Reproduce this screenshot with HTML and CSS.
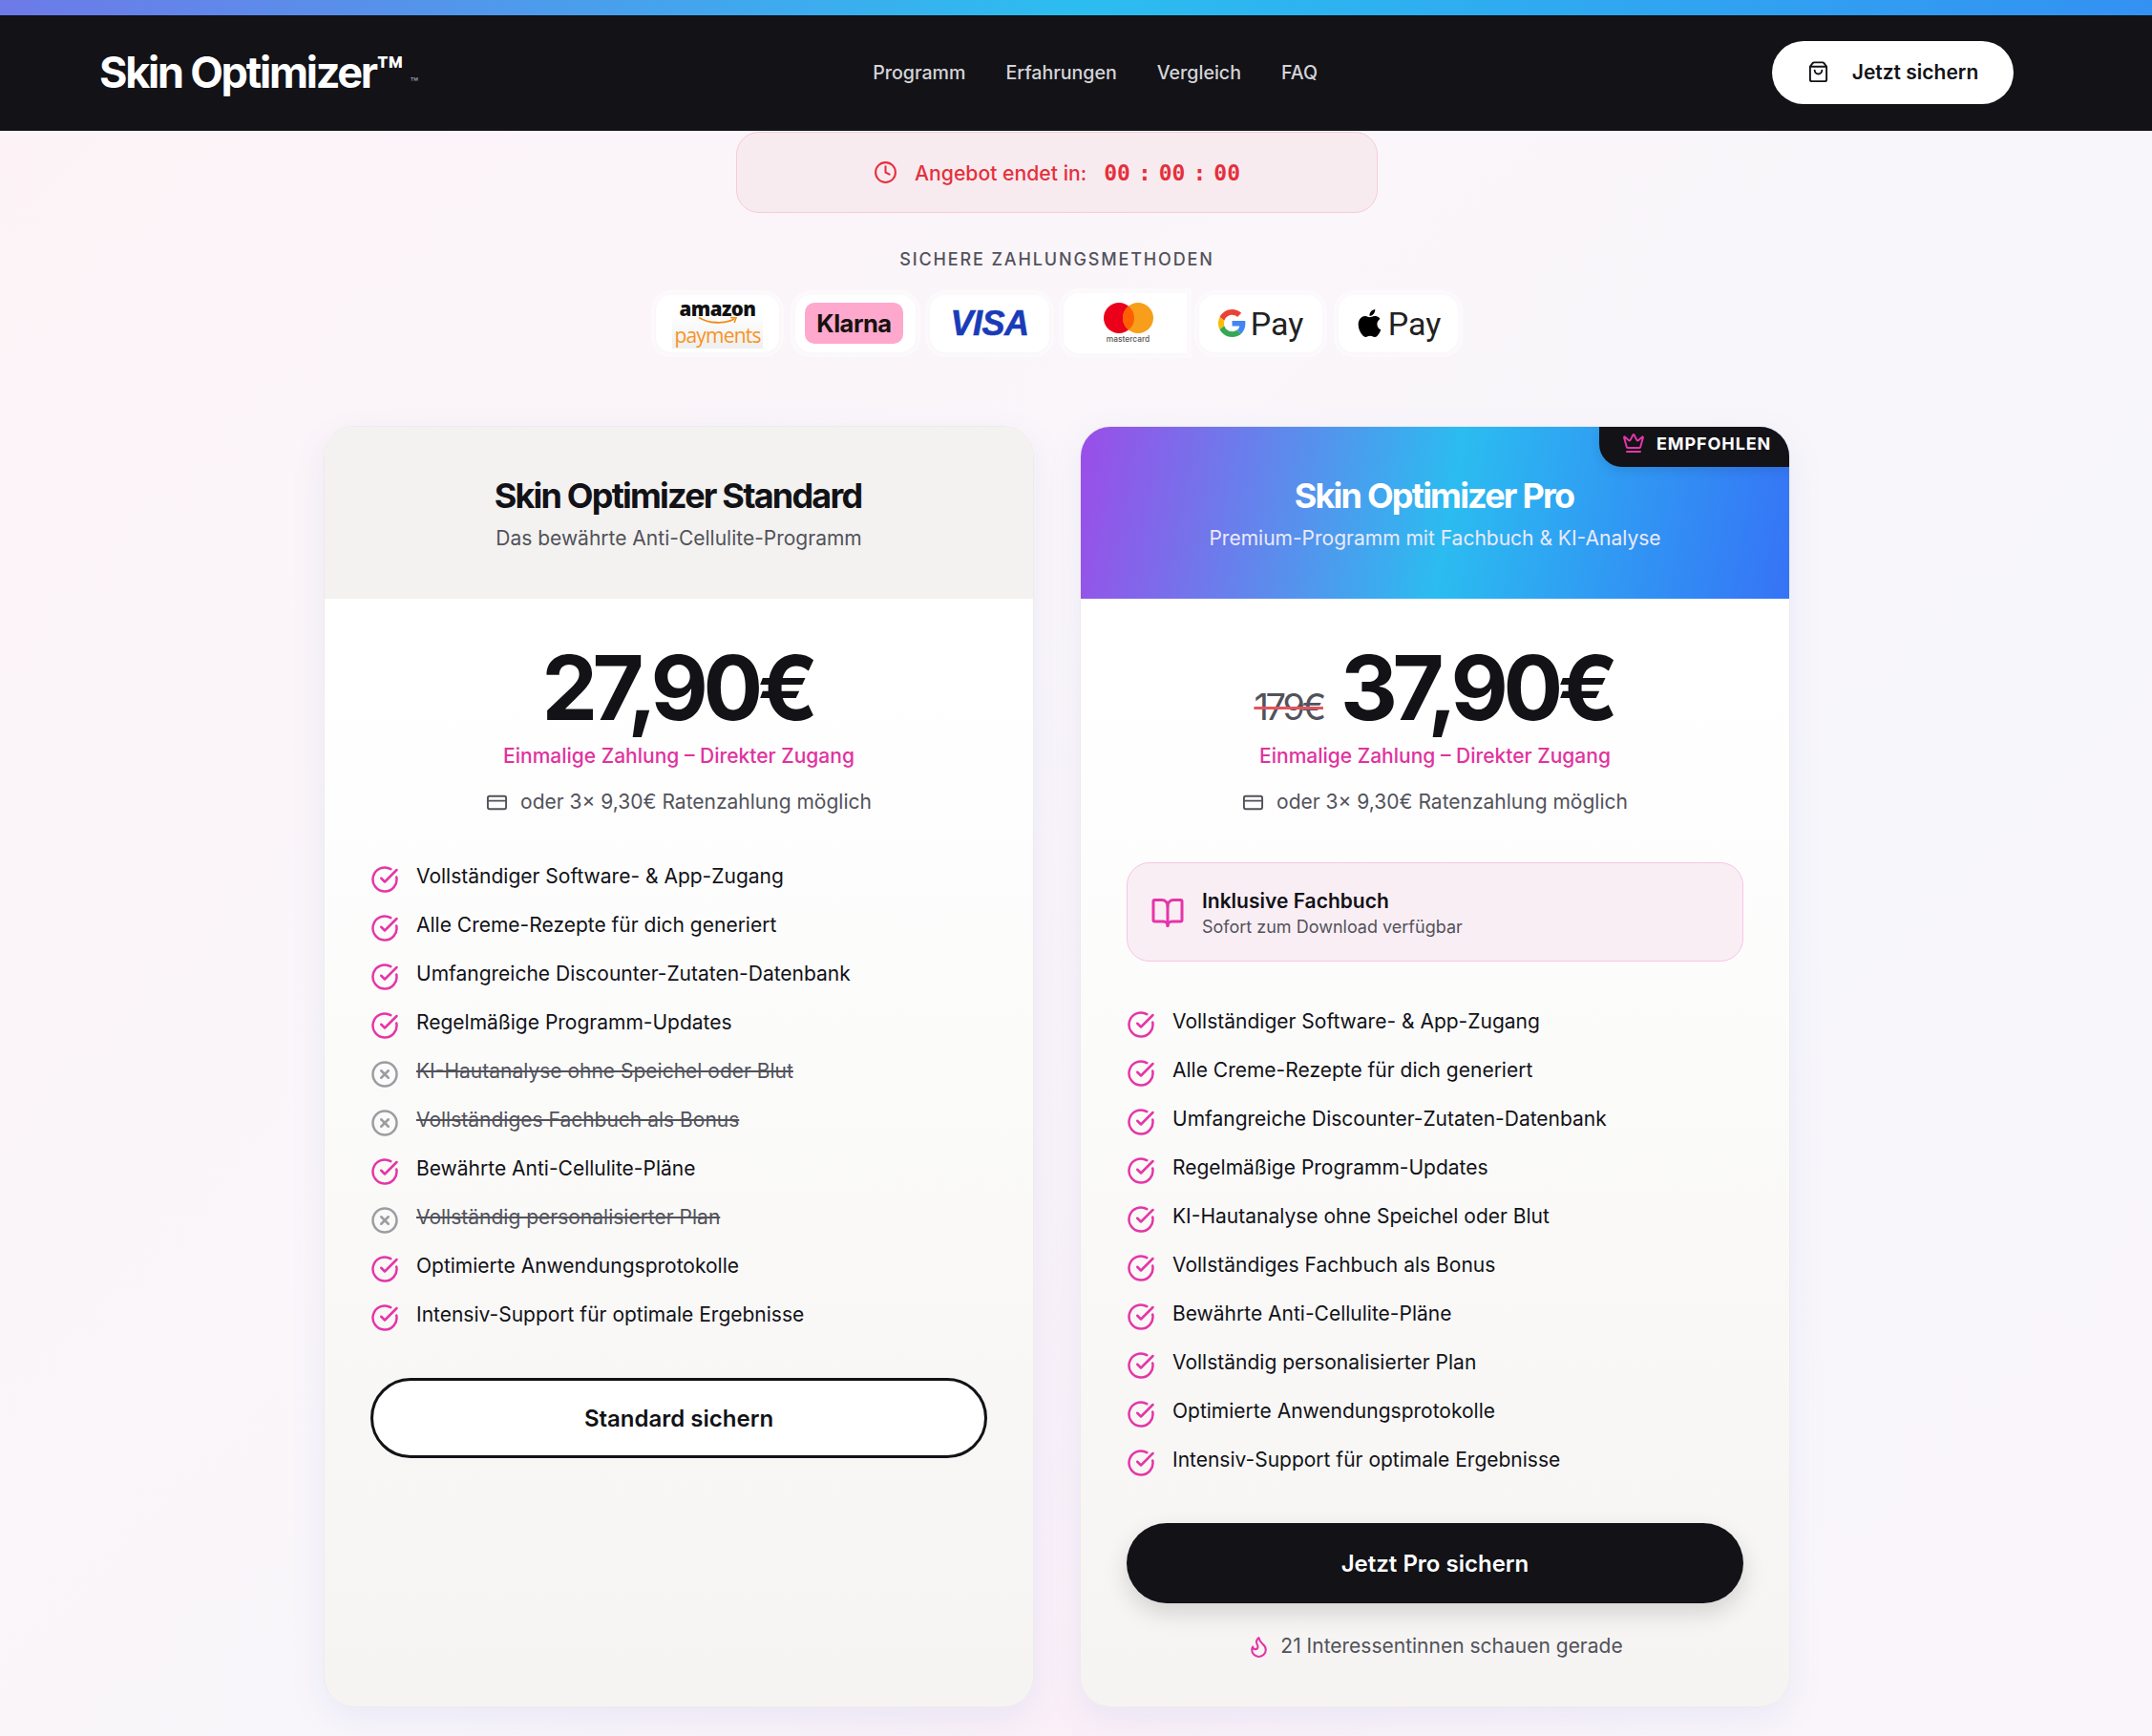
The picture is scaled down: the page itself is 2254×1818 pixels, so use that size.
FILE: index.html
```html
<!DOCTYPE html>
<html lang="de">
<head>
  <meta charset="UTF-8">
  <meta name="viewport" content="width=device-width, initial-scale=1.0">
  <title>Skin Optimizer</title>
  <link rel="stylesheet" href="styles.css">
</head>
<body>
  <svg class="icon-defs" width="0" height="0">
    <symbol id="i-check" viewBox="0 0 24 24"><path d="M21.801 10A10 10 0 1 1 17 3.335"/><path d="m9 11 3 3L22 4"/></symbol>
    <symbol id="i-x" viewBox="0 0 24 24"><circle cx="12" cy="12" r="10"/><path d="m15 9-6 6"/><path d="m9 9 6 6"/></symbol>
    <symbol id="i-card" viewBox="0 0 24 24"><rect x="2" y="5" width="20" height="14" rx="2"/><path d="M2 10h20"/></symbol>
  </svg>

  <div class="top-bar"></div>
  <header class="site-header">
    <div class="logo">Skin Optimizer™<span class="logo-tm">™</span></div>
    <nav class="main-nav">
      <a>Programm</a>
      <a>Erfahrungen</a>
      <a>Vergleich</a>
      <a>FAQ</a>
    </nav>
    <a class="header-cta">
      <svg class="ico cta-ico" viewBox="0 0 24 24"><path d="M16 10a4 4 0 0 1-8 0"/><path d="M3.103 6.034h17.794"/><path d="M3.4 5.467a2 2 0 0 0-.4 1.2V20a2 2 0 0 0 2 2h14a2 2 0 0 0 2-2V6.667a2 2 0 0 0-.4-1.2l-2.4-3.2a2 2 0 0 0-1.6-.8H7.4a2 2 0 0 0-1.6.8z"/></svg>
      Jetzt sichern
    </a>
  </header>

  <main class="page">
    <div class="timer">
      <svg class="ico timer-ico" viewBox="0 0 24 24"><circle cx="12" cy="12" r="10"/><path d="M12 6v6l4 2"/></svg>
      <span class="timer-label">Angebot endet in:</span>
      <span class="timer-digits"><span>00</span><span>:</span><span>00</span><span>:</span><span>00</span></span>
    </div>

    <h2 class="pay-title">SICHERE ZAHLUNGSMETHODEN</h2>
    <div class="pay-row">
      <div class="pay-card pay-amazon">
        <div class="amazon">
          <span class="amazon-name">amazon</span>
          <svg class="amazon-smile" viewBox="0 0 42 9"><path d="M1 1.5C11 8 28 8.500 38 3" fill="none" stroke="#f08a12" stroke-width="1.800"/><path d="M34 1.500l6 .5-2 5" fill="none" stroke="#f08a12" stroke-width="1.500"/></svg>
          <span class="amazon-pay">payments</span>
        </div>
      </div>
      <div class="pay-card pay-klarna"><span class="klarna">Klarna</span></div>
      <div class="pay-card"><span class="visa">VISA</span></div>
      <div class="pay-card pay-card-mc">
        <svg class="mc-circles" viewBox="0 0 52 32">
          <circle cx="16" cy="16" r="16" fill="#eb001b"/>
          <circle cx="36" cy="16" r="16" fill="#f79e1b"/>
          <path d="M26 3.500a16 16 0 0 1 0 25 16 16 0 0 1 0-25z" fill="#ff5f00"/>
        </svg>
        <span class="mc-name">mastercard</span>
      </div>
      <div class="pay-card pay-gpay">
        <svg class="g-mark" viewBox="0 0 48 48">
          <path fill="#EA4335" d="M24 9.500c3.540 0 6.710 1.220 9.210 3.600l6.850-6.850C35.900 2.380 30.470 0 24 0 14.620 0 6.510 5.380 2.560 13.220l7.980 6.190C12.430 13.720 17.740 9.500 24 9.500z"/>
          <path fill="#4285F4" d="M46.980 24.550c0-1.570-.15-3.090-.38-4.550H24v9.020h12.940c-.58 2.960-2.260 5.480-4.780 7.180l7.730 6c4.510-4.180 7.090-10.360 7.090-17.650z"/>
          <path fill="#FBBC05" d="M10.530 28.590c-.48-1.450-.76-2.990-.76-4.590s.27-3.140.76-4.590l-7.980-6.190C.92 16.460 0 20.120 0 24c0 3.880.92 7.540 2.560 10.780l7.970-6.190z"/>
          <path fill="#34A853" d="M24 48c6.480 0 11.930-2.130 15.890-5.810l-7.730-6c-2.150 1.450-4.920 2.300-8.160 2.300-6.260 0-11.570-4.220-13.470-9.910l-7.980 6.190C6.510 42.620 14.620 48 24 48z"/>
        </svg>
        <span class="pay-word">Pay</span>
      </div>
      <div class="pay-card">
        <svg class="apple-mark" viewBox="0 0 24 24"><path d="M12.152 6.896c-.948 0-2.415-1.078-3.960-1.040-2.040.027-3.910 1.183-4.961 3.014-2.117 3.675-.546 9.103 1.519 12.090 1.013 1.454 2.208 3.090 3.792 3.039 1.520-.065 2.090-.987 3.935-.987 1.831 0 2.350.987 3.960.948 1.637-.026 2.676-1.480 3.676-2.948 1.156-1.688 1.636-3.325 1.662-3.415-.039-.013-3.182-1.221-3.220-4.857-.026-3.040 2.480-4.494 2.597-4.559-1.429-2.090-3.623-2.324-4.390-2.376-2-.156-3.675 1.090-4.610 1.090zM15.530 3.830c.843-1.012 1.400-2.427 1.245-3.830-1.207.052-2.662.805-3.532 1.818-.78.896-1.454 2.338-1.273 3.714 1.338.104 2.715-.688 3.559-1.701"/></svg>
        <span class="pay-word">Pay</span>
      </div>
    </div>

    <section class="plans">
      <article class="plan">
        <div class="plan-head">
          <h3>Skin Optimizer Standard</h3>
          <p>Das bewährte Anti-Cellulite-Programm</p>
        </div>
        <div class="plan-body">
          <div class="price-row"><span class="price">27,90€</span></div>
          <div class="price-note">Einmalige Zahlung – Direkter Zugang</div>
          <div class="price-split"><svg class="ico split-ico"><use href="#i-card"/></svg>oder 3× 9,30€ Ratenzahlung möglich</div>
          <ul class="features">
            <li><svg class="ico f-ico"><use href="#i-check"/></svg>Vollständiger Software- &amp; App-Zugang</li>
            <li><svg class="ico f-ico"><use href="#i-check"/></svg>Alle Creme-Rezepte für dich generiert</li>
            <li><svg class="ico f-ico"><use href="#i-check"/></svg>Umfangreiche Discounter-Zutaten-Datenbank</li>
            <li><svg class="ico f-ico"><use href="#i-check"/></svg>Regelmäßige Programm-Updates</li>
            <li class="off"><svg class="ico f-ico"><use href="#i-x"/></svg><s>KI-Hautanalyse ohne Speichel oder Blut</s></li>
            <li class="off"><svg class="ico f-ico"><use href="#i-x"/></svg><s>Vollständiges Fachbuch als Bonus</s></li>
            <li><svg class="ico f-ico"><use href="#i-check"/></svg>Bewährte Anti-Cellulite-Pläne</li>
            <li class="off"><svg class="ico f-ico"><use href="#i-x"/></svg><s>Vollständig personalisierter Plan</s></li>
            <li><svg class="ico f-ico"><use href="#i-check"/></svg>Optimierte Anwendungsprotokolle</li>
            <li><svg class="ico f-ico"><use href="#i-check"/></svg>Intensiv-Support für optimale Ergebnisse</li>
          </ul>
          <a class="btn btn-outline">Standard sichern</a>
        </div>
      </article>

      <article class="plan">
        <div class="badge">
          <svg class="ico badge-ico" viewBox="0 0 24 24"><path d="M11.562 3.266a.5.5 0 0 1 .876 0L15.390 8.870a1 1 0 0 0 1.516.294L21.183 5.500a.5.5 0 0 1 .798.519l-2.834 10.246a1 1 0 0 1-.956.734H5.810a1 1 0 0 1-.957-.734L2.020 6.020a.5.5 0 0 1 .798-.519l4.276 3.664a1 1 0 0 0 1.516-.294z"/><path d="M5 21h14"/></svg>
          EMPFOHLEN
        </div>
        <div class="plan-head plan-head-pro">
          <h3>Skin Optimizer Pro</h3>
          <p>Premium-Programm mit Fachbuch &amp; KI-Analyse</p>
        </div>
        <div class="plan-body">
          <div class="price-row"><s class="price-old">179€</s><span class="price">37,90€</span></div>
          <div class="price-note">Einmalige Zahlung – Direkter Zugang</div>
          <div class="price-split"><svg class="ico split-ico"><use href="#i-card"/></svg>oder 3× 9,30€ Ratenzahlung möglich</div>
          <div class="book">
            <svg class="ico book-ico" viewBox="0 0 24 24"><path d="M12 7v14"/><path d="M3 18a1 1 0 0 1-1-1V4a1 1 0 0 1 1-1h5a4 4 0 0 1 4 4 4 4 0 0 1 4-4h5a1 1 0 0 1 1 1v13a1 1 0 0 1-1 1h-6a3 3 0 0 0-3 3 3 3 0 0 0-3-3z"/></svg>
            <div class="book-text">
              <div class="book-title">Inklusive Fachbuch</div>
              <div class="book-sub">Sofort zum Download verfügbar</div>
            </div>
          </div>
          <ul class="features">
            <li><svg class="ico f-ico"><use href="#i-check"/></svg>Vollständiger Software- &amp; App-Zugang</li>
            <li><svg class="ico f-ico"><use href="#i-check"/></svg>Alle Creme-Rezepte für dich generiert</li>
            <li><svg class="ico f-ico"><use href="#i-check"/></svg>Umfangreiche Discounter-Zutaten-Datenbank</li>
            <li><svg class="ico f-ico"><use href="#i-check"/></svg>Regelmäßige Programm-Updates</li>
            <li><svg class="ico f-ico"><use href="#i-check"/></svg>KI-Hautanalyse ohne Speichel oder Blut</li>
            <li><svg class="ico f-ico"><use href="#i-check"/></svg>Vollständiges Fachbuch als Bonus</li>
            <li><svg class="ico f-ico"><use href="#i-check"/></svg>Bewährte Anti-Cellulite-Pläne</li>
            <li><svg class="ico f-ico"><use href="#i-check"/></svg>Vollständig personalisierter Plan</li>
            <li><svg class="ico f-ico"><use href="#i-check"/></svg>Optimierte Anwendungsprotokolle</li>
            <li><svg class="ico f-ico"><use href="#i-check"/></svg>Intensiv-Support für optimale Ergebnisse</li>
          </ul>
          <a class="btn btn-dark">Jetzt Pro sichern</a>
          <div class="viewers">
            <svg class="ico flame-ico" viewBox="0 0 24 24"><path d="M8.500 14.500A2.500 2.500 0 0 0 11 12c0-1.380-.5-2-1-3-1.072-2.143-.224-4.054 2-6 .5 2.500 2 4.900 4 6.500 2 1.600 3 3.500 3 5.500a7 7 0 1 1-14 0c0-1.153.433-2.294 1-3a2.500 2.500 0 0 0 2.500 2.500z"/></svg>
            21 Interessentinnen schauen gerade
          </div>
        </div>
      </article>
    </section>
  </main>
</body>
</html>
```

FILE: styles.css
```css
* {
  box-sizing: border-box;
}

body {
  margin: 0;
  font-family: Inter, "Liberation Sans", sans-serif;
  color: #121217;
  background:
    radial-gradient(ellipse at 50% 100%, rgba(252, 235, 246, 0.6), transparent 45%),
    linear-gradient(135deg, #fdf3f7 0%, #faf6fa 40%, #f7f6fb 70%, #faf5fa 100%);
  min-height: 100vh;
}

.icon-defs {
  position: absolute;
}

.ico {
  fill: none;
  stroke: currentColor;
  stroke-width: 2;
  stroke-linecap: round;
  stroke-linejoin: round;
  flex-shrink: 0;
}

.top-bar {
  height: 16px;
  background: linear-gradient(90deg, #6d7ae8 0%, #2cbdf0 50%, #3391f2 100%);
}

.site-header {
  height: 121px;
  padding: 0 145px 2px 104px;
  display: flex;
  align-items: center;
  justify-content: space-between;
  background: #121217;
}

.logo {
  font-size: 45px;
  font-weight: 700;
  letter-spacing: -0.05em;
  color: #fff;
  white-space: nowrap;
}

.logo-tm {
  font-size: 14px;
  font-weight: 500;
  letter-spacing: 0;
  color: #9a9aa2;
  margin-left: 9px;
}

.main-nav {
  display: flex;
  gap: 42px;
}

.main-nav a {
  font-size: 19.600px;
  font-weight: 500;
  color: #d4d4d8;
}

.header-cta {
  width: 253px;
  height: 66px;
  display: flex;
  align-items: center;
  justify-content: center;
  gap: 24px;
  border-radius: 33px;
  background: #fff;
  font-size: 21px;
  font-weight: 600;
  color: #121217;
}

.cta-ico {
  width: 23px;
  height: 23px;
}

.page {
  padding: 1px 40px 31px 0;
  display: flex;
  flex-direction: column;
  align-items: center;
}

.timer {
  width: 672px;
  height: 85px;
  display: flex;
  align-items: center;
  justify-content: center;
  border: 1px solid #f6cdd2;
  border-radius: 24px;
  background: #f8ebf0;
  color: #e5303c;
}

.timer-ico {
  width: 25px;
  height: 25px;
  margin-right: 18px;
}

.timer-label {
  font-size: 21.200px;
  font-weight: 500;
}

.timer-digits {
  display: flex;
  gap: 8px;
  margin-left: 18px;
  font-family: "DejaVu Sans Mono", "Liberation Mono", monospace;
  font-size: 23px;
  font-weight: 700;
}

.pay-title {
  margin: 36px 0 0;
  font-size: 18px;
  line-height: 26px;
  font-weight: 500;
  letter-spacing: 1.860px;
  color: #52525b;
}

.pay-row {
  display: flex;
  gap: 15px;
  margin-top: 22px;
  align-items: center;
}

.pay-card {
  width: 125px;
  height: 60px;
  display: flex;
  align-items: center;
  justify-content: center;
  gap: 5px;
  border-radius: 16px;
  background: #fff;
  box-shadow: 0 0 0 5px rgba(255, 255, 255, 0.45), 0 1px 4px rgba(0, 0, 0, 0.04);
}

.pay-amazon {
  width: 129px;
  margin-right: 2px;
}

.pay-klarna {
  width: 126px;
  padding-right: 3px;
}

.amazon {
  width: 95px;
  height: 52px;
  display: flex;
  flex-direction: column;
  align-items: center;
  background: linear-gradient(#fff 30%, #efefef);
  line-height: 1;
}

.amazon-name {
  font-family: "Open Sans", sans-serif;
  font-size: 20.500px;
  font-weight: 800;
  letter-spacing: -0.5px;
  color: #111;
  line-height: 20px;
}

.amazon-smile {
  width: 42px;
  height: 9px;
  margin-top: -2px;
}

.amazon-pay {
  font-family: "Open Sans", sans-serif;
  font-size: 21px;
  letter-spacing: -0.8px;
  color: #f7931e;
  line-height: 22px;
}

.klarna {
  width: 103px;
  height: 43px;
  display: flex;
  align-items: center;
  justify-content: center;
  border-radius: 10px;
  background: #ffa8cd;
  font-size: 25.500px;
  font-weight: 700;
  letter-spacing: -0.5px;
  color: #17120f;
}

.visa {
  font-family: "Liberation Sans", sans-serif;
  font-size: 36px;
  font-weight: 700;
  font-style: italic;
  letter-spacing: -0.5px;
  color: #1a3bb8;
  -webkit-text-stroke: 0.6px #1a3bb8;
}

.pay-card-mc {
  width: 129px;
  height: 63px;
  margin-right: -2px;
  padding-left: 6px;
  flex-direction: column;
  gap: 1px;
  border-radius: 16px 0 0 16px;
}

.mc-circles {
  width: 52px;
  height: 32px;
}

.mc-name {
  font-size: 8.400px;
  font-weight: 500;
  color: #555;
}

.pay-gpay {
  width: 129px;
  margin-right: 2px;
}

.g-mark {
  width: 29px;
  height: 29px;
}

.apple-mark {
  width: 29px;
  height: 29px;
  fill: #000;
}

.pay-word {
  font-family: Roboto, sans-serif;
  font-size: 34px;
  color: #222;
}

.plans {
  width: 1536px;
  display: grid;
  grid-template-columns: 1fr 1fr;
  gap: 48px;
  margin-top: 76px;
}

.plan {
  position: relative;
  overflow: hidden;
  display: flex;
  flex-direction: column;
  border: 1px solid #eeebeb;
  border-radius: 32px;
  background: linear-gradient(#fff 20%, #f5f4f2 100%);
  box-shadow: 0 12px 36px rgba(100, 130, 220, 0.1);
}

.plan-head {
  height: 180px;
  padding-top: 50px;
  text-align: center;
  background: #f3f2f0;
}

.plan-head h3 {
  margin: 0;
  padding-right: 2px;
  font-size: 36px;
  line-height: 44px;
  font-weight: 700;
  letter-spacing: -0.05em;
}

.plan-head p {
  margin: 7px 0 0;
  font-size: 21px;
  line-height: 32px;
  color: #52525b;
}

.plan-head-pro {
  background: linear-gradient(100deg, #9b4de8 0%, #2bbcf0 52%, #3673f6 100%);
  color: #fff;
}

.plan-head-pro p {
  color: #ece9fb;
}

.badge {
  position: absolute;
  top: 0;
  right: 0;
  width: 199px;
  height: 42px;
  padding: 0 0 8px 24px;
  display: flex;
  align-items: center;
  gap: 12px;
  border-bottom-left-radius: 24px;
  background: #121217;
  color: #fff;
  font-size: 18px;
  font-weight: 700;
  letter-spacing: 0.9px;
  box-shadow: 0 4px 12px rgba(0, 0, 0, 0.1);
}

.badge-ico {
  width: 24px;
  height: 24px;
  color: #e535a8;
}

.plan-body {
  flex: 1;
  padding: 47px 48px 47px;
}

.price-row {
  display: flex;
  align-items: baseline;
  justify-content: center;
  gap: 18px;
}

.price {
  margin-right: 3px;
  font-size: 93px;
  line-height: 92px;
  font-weight: 700;
  letter-spacing: -0.06em;
}

.price-old {
  font-size: 38px;
  font-weight: 400;
  letter-spacing: -0.085em;
  color: #52525b;
  text-decoration-color: #e5535c;
  text-decoration-thickness: 3px;
}

.price-note {
  margin-top: 10px;
  text-align: center;
  font-size: 21px;
  line-height: 32px;
  font-weight: 500;
  color: #e0339f;
}

.price-split {
  margin-top: 16px;
  display: flex;
  align-items: center;
  justify-content: center;
  gap: 13px;
  font-size: 21px;
  line-height: 32px;
  color: #52525b;
}

.split-ico {
  width: 23px;
  height: 23px;
}

.book {
  margin-top: 47px;
  height: 104px;
  padding: 2px 24px 0;
  display: flex;
  align-items: center;
  gap: 18px;
  border: 1px solid #f6c6e3;
  border-radius: 24px;
  background: #faeef5;
}

.book-text {
  padding-top: 1px;
}

.book-ico {
  width: 36px;
  height: 36px;
  color: #e535a8;
}

.book-title {
  font-size: 21px;
  line-height: 28px;
  font-weight: 600;
}

.book-sub {
  font-size: 18px;
  line-height: 26px;
  color: #52525b;
}

.features {
  list-style: none;
  margin: 45px 0 0;
  padding: 0;
  display: flex;
  flex-direction: column;
  gap: 16px;
}

.book + .features {
  margin-top: 46px;
}

.features li {
  display: flex;
  align-items: flex-start;
  gap: 18px;
  font-size: 21px;
  line-height: 34px;
}

.f-ico {
  width: 30px;
  height: 30px;
  margin-top: 5px;
  color: #e535a8;
}

.features .off {
  color: #52525b;
}

.features .off .f-ico {
  color: #9c9ca3;
}

.btn {
  margin-top: 48px;
  height: 84px;
  display: flex;
  align-items: center;
  justify-content: center;
  border-radius: 42px;
  font-size: 24px;
  font-weight: 600;
}

.btn-outline {
  border: 3px solid #121217;
  background: #fff;
}

.btn-dark {
  background: #121217;
  color: #fff;
  box-shadow: 0 10px 24px rgba(0, 0, 0, 0.14);
}

.viewers {
  margin-top: 29px;
  display: flex;
  align-items: center;
  justify-content: center;
  gap: 10px;
  font-size: 21px;
  line-height: 32px;
  color: #52525b;
}

.flame-ico {
  width: 25px;
  height: 25px;
  color: #e535a8;
}
```
